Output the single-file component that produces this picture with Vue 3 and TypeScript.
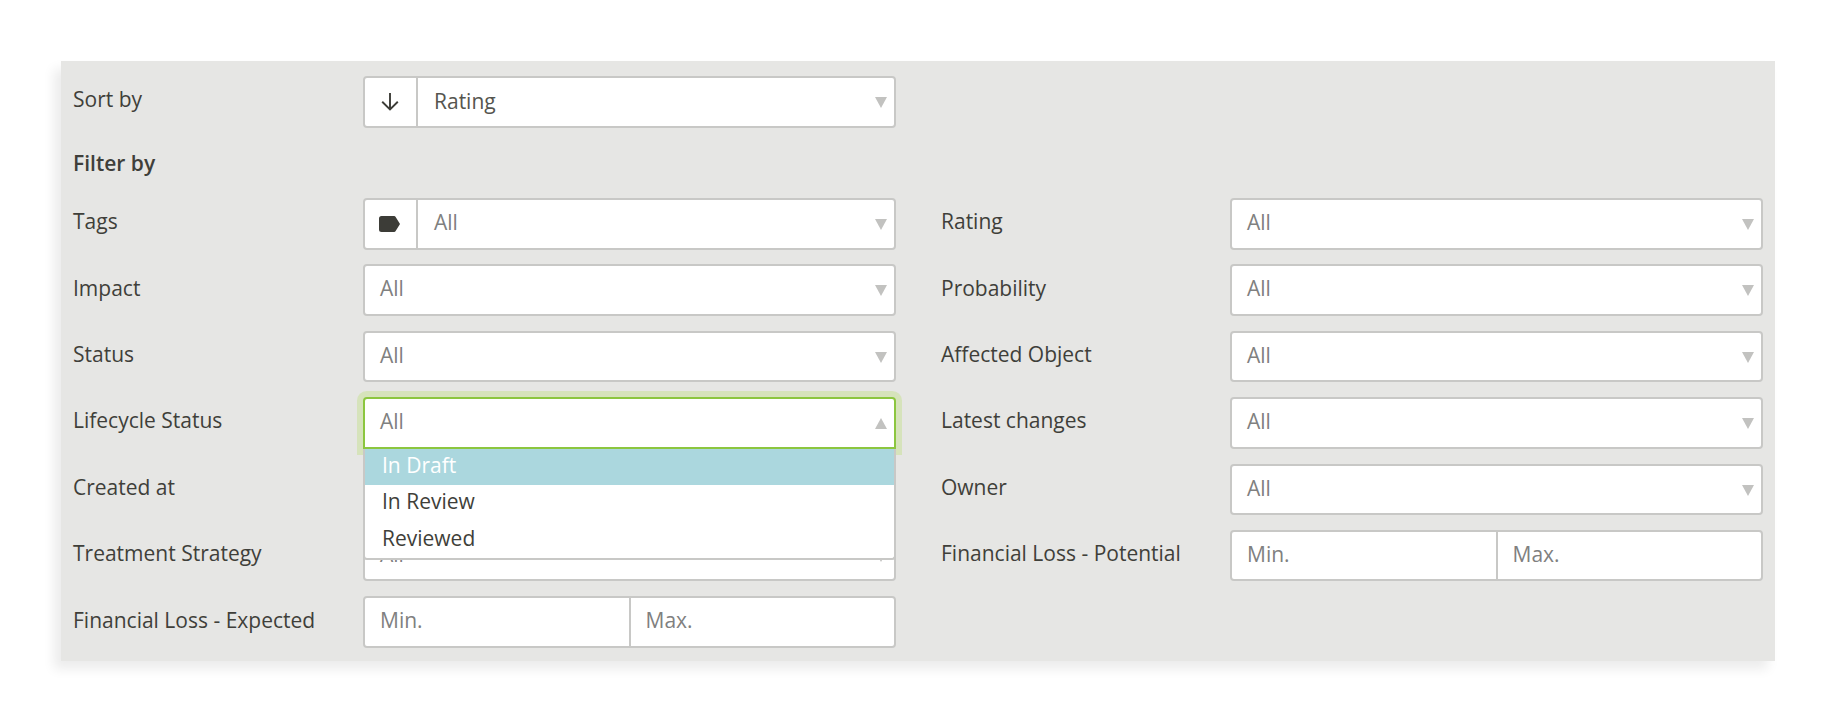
<script setup lang="ts">
interface Field {
  label: string
  kind: 'select' | 'tag' | 'open' | 'range'
}

const fields: Field[] = [
  { label: 'Tags', kind: 'tag' },
  { label: 'Rating', kind: 'select' },
  { label: 'Impact', kind: 'select' },
  { label: 'Probability', kind: 'select' },
  { label: 'Status', kind: 'select' },
  { label: 'Affected Object', kind: 'select' },
  { label: 'Lifecycle Status', kind: 'open' },
  { label: 'Latest changes', kind: 'select' },
  { label: 'Created at', kind: 'select' },
  { label: 'Owner', kind: 'select' },
  { label: 'Treatment Strategy', kind: 'select' },
  { label: 'Financial Loss - Potential', kind: 'range' },
  { label: 'Financial Loss - Expected', kind: 'range' }
]

const options = ['In Draft', 'In Review', 'Reviewed']
</script>

<template>
  <div class="page">
    <section class="panel">
      <div class="field">
        <label class="label">Sort by</label>
        <div class="control">
          <span class="addon">
            <svg width="18" height="19" viewBox="0 0 18 19" fill="none" stroke="#3c3c37" stroke-width="1.9">
              <path d="M9 1V17.5M1.2 9.8 9 17.5l7.8-7.7" />
            </svg>
          </span>
          <span class="value selected">Rating</span>
          <span class="caret"></span>
        </div>
      </div>

      <h2 class="heading">Filter by</h2>

      <div class="filters">
        <div v-for="f in fields" :key="f.label" class="field">
          <label class="label">{{ f.label }}</label>

          <div v-if="f.kind === 'range'" class="control">
            <input class="range" placeholder="Min." />
            <input class="range divided" placeholder="Max." />
          </div>

          <div v-else class="control" :class="{ open: f.kind === 'open' }">
            <span v-if="f.kind === 'tag'" class="addon">
              <svg width="21" height="16" viewBox="0 0 21 16">
                <path
                  fill="#3c3c37"
                  d="M2.5 0H15.2a1.6 1.6 0 0 1 1.3.7L21 8l-4.5 7.3a1.6 1.6 0 0 1-1.3.7H2.5A2.5 2.5 0 0 1 0 13.5v-11A2.5 2.5 0 0 1 2.5 0Z"
                />
              </svg>
            </span>
            <span class="value">All</span>
            <span class="caret" :class="{ up: f.kind === 'open' }"></span>

            <ul v-if="f.kind === 'open'" class="menu">
              <li v-for="(o, i) in options" :key="o" class="option" :class="{ active: i === 0 }">{{ o }}</li>
            </ul>
          </div>
        </div>
      </div>
    </section>
  </div>
</template>

<style>
body {
  background: #fff;
}
</style>

<style scoped>
.page {
  padding: 61px 73px 61px 61px;
  font-family: "Open Sans", "Liberation Sans", sans-serif;
  font-size: 21px;
  color: #3f3f3a;
}

.panel {
  box-sizing: border-box;
  width: 1714px;
  height: 600px;
  padding: 15px 12px 13px;
  background: #e6e6e4;
  box-shadow: -7px 8px 11px rgba(0, 0, 0, 0.08);
}

.field {
  display: grid;
  grid-template-columns: 1fr 533px;
  align-items: center;
  width: 823px;
}

.label {
  margin-top: -5px;
}

.heading {
  display: flex;
  align-items: center;
  height: 70.5px;
  margin: 0;
  font-size: 21px;
  font-weight: 600;
}

.filters {
  display: grid;
  grid-template-columns: 823px 822px;
  column-gap: 45px;
  row-gap: 14.9px;
}

.filters .field {
  width: auto;
}

.control {
  position: relative;
  display: flex;
  box-sizing: border-box;
  height: 51.5px;
  background: #fff;
  border: 2px solid #c8c8c6;
  border-radius: 4px;
}

.control.open {
  z-index: 2;
  border-color: #8cc63f;
  border-bottom-left-radius: 0;
  border-bottom-right-radius: 0;
  box-shadow: 0 0 0 6px #d6e3bb;
}

.addon {
  display: flex;
  flex: none;
  box-sizing: border-box;
  align-items: center;
  justify-content: center;
  width: 53px;
  padding-right: 2px;
  border-right: 2px solid #c8c8c6;
}

.value {
  flex: 1;
  padding-left: 15px;
  line-height: 45px;
  color: #808080;
}

.addon + .value {
  padding-left: 16px;
}

.value.selected {
  line-height: 47px;
  color: #55554f;
}

.caret {
  position: absolute;
  top: 19px;
  right: 7px;
  width: 0;
  height: 0;
  border-top: 11px solid #c2c2c0;
  border-left: 6px solid transparent;
  border-right: 6px solid transparent;
}

.caret.up {
  border-top: 0;
  border-bottom: 11px solid #c2c2c0;
}

.range {
  flex: 1;
  min-width: 0;
  padding: 0 0 4px 15px;
  font: inherit;
  background: transparent;
  border: 0;
  outline: 0;
}

.range::placeholder {
  color: #808080;
  opacity: 1;
}

.range.divided {
  border-left: 2px solid #c8c8c6;
}

.menu {
  position: absolute;
  top: calc(100% + 2px);
  left: -2px;
  right: -2px;
  margin: 0;
  padding: 0;
  list-style: none;
  background: #fff;
  border: 2px solid #c8c8c6;
  border-top: 0;
  border-radius: 0 0 4px 4px;
}

.option {
  height: 36.5px;
  padding-left: 17px;
  line-height: 33px;
}

.option.active {
  color: #fff;
  background: #abd7de;
}
</style>
